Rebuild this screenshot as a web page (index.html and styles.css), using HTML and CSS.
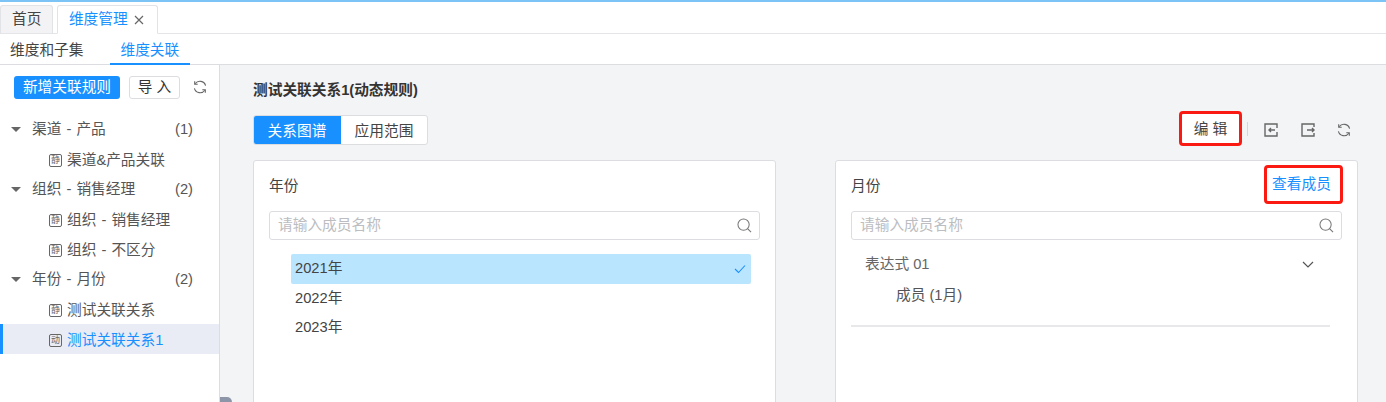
FILE: index.html
```html
<!DOCTYPE html>
<html lang="zh-CN">
<head>
<meta charset="utf-8">
<title>维度管理</title>
<link rel="stylesheet" href="styles.css">
</head>
<body>
<svg width="0" height="0" class="defs">
  <defs>
    <symbol id="refresh" viewBox="0 0 14 14"><path d="M12.6 5.6A5.8 5.8 0 0 0 2.2 3.8M1.4 8.4a5.8 5.8 0 0 0 10.4 1.8" fill="none" stroke="currentColor" stroke-width="1.1"/><path d="M1.7 1.2v3h3M12.3 12.8v-3h-3" fill="none" stroke="currentColor" stroke-width="1.1"/></symbol>
    <symbol id="search" viewBox="0 0 16 16"><circle cx="7" cy="7" r="6" fill="none" stroke="currentColor" stroke-width="1.1"/><path d="M11.5 11.5l3.5 3.5" stroke="currentColor" stroke-width="1.2" fill="none"/></symbol>
  </defs>
</svg>
<div class="app">
  <div class="tabbar">
    <div class="tab">首页</div>
    <div class="tab tab-active"><span>维度管理</span><svg class="close" viewBox="0 0 10 10"><path d="M1 1l8 8M9 1l-8 8" fill="none" stroke="currentColor" stroke-width="1.2"/></svg></div>
  </div>
  <div class="subnav">
    <div class="subnav-item">维度和子集</div>
    <div class="subnav-item subnav-active">维度关联</div>
  </div>
  <div class="body">
    <aside class="sidebar">
      <div class="side-actions">
        <button class="btn-primary">新增关联规则</button>
        <button class="btn-import">导 入</button>
        <svg class="side-refresh"><use href="#refresh"/></svg>
      </div>
      <ul class="tree">
        <li class="group"><i class="caret"></i><span class="label">渠道 - 产品</span><span class="count">(1)</span></li>
        <li class="leaf"><span class="badge">静</span>渠道&amp;产品关联</li>
        <li class="group"><i class="caret"></i><span class="label">组织 - 销售经理</span><span class="count">(2)</span></li>
        <li class="leaf"><span class="badge">静</span>组织 - 销售经理</li>
        <li class="leaf"><span class="badge">静</span>组织 - 不区分</li>
        <li class="group"><i class="caret"></i><span class="label">年份 - 月份</span><span class="count">(2)</span></li>
        <li class="leaf"><span class="badge">静</span>测试关联关系</li>
        <li class="leaf leaf-active"><span class="badge">动</span>测试关联关系1</li>
      </ul>
    </aside>
    <main class="main">
      <h1 class="title">测试关联关系1(动态规则)</h1>
      <div class="toolbar">
        <div class="seg">
          <div class="seg-item seg-active">关系图谱</div>
          <div class="seg-item">应用范围</div>
        </div>
        <div class="tools">
          <button class="btn-edit">编 辑</button>
          <span class="tool-sep"></span>
          <svg class="tool-icon" viewBox="0 0 14 14"><path d="M6 1H1v12h12V9M13 5V1H6" fill="none" stroke="currentColor" stroke-width="1.4"/><path d="M11 7H5M7 5L5 7l2 2" fill="none" stroke="currentColor" stroke-width="1.4"/></svg>
          <svg class="tool-icon" viewBox="0 0 14 14"><path d="M13 4V1H1v12h12v-3" fill="none" stroke="currentColor" stroke-width="1.4"/><path d="M6 7h7M11 5l2 2-2 2" fill="none" stroke="currentColor" stroke-width="1.4"/></svg>
          <svg class="tool-icon"><use href="#refresh"/></svg>
        </div>
      </div>
      <div class="panels">
        <section class="panel">
          <div class="panel-head"><span>年份</span></div>
          <div class="search"><span class="placeholder">请输入成员名称</span><svg class="search-icon"><use href="#search"/></svg></div>
          <ul class="members">
            <li class="member member-active">2021年<svg class="check" viewBox="0 0 12 10"><path d="M1 5l3.5 3.5L11 1.5" fill="none" stroke="currentColor" stroke-width="1.1"/></svg></li>
            <li class="member">2022年</li>
            <li class="member">2023年</li>
          </ul>
        </section>
        <section class="panel">
          <div class="panel-head"><span>月份</span><a class="view-link">查看成员</a></div>
          <div class="search"><span class="placeholder">请输入成员名称</span><svg class="search-icon"><use href="#search"/></svg></div>
          <div class="expr">
            <div class="expr-head"><span>表达式 01</span><svg class="chevron" viewBox="0 0 12 7"><path d="M1 1l5 5 5-5" fill="none" stroke="currentColor" stroke-width="1.2"/></svg></div>
            <div class="expr-body">成员 (1月)</div>
          </div>
        </section>
      </div>
    </main>
    <div class="handle"></div>
  </div>
</div>
</body>
</html>
```
FILE: styles.css
```css
* { box-sizing: border-box; }
html, body { margin: 0; height: 100%; overflow: hidden; background: #fff; }
body { font: 14.7px/1.4 "Liberation Sans", "Noto Sans CJK SC", sans-serif; color: #333; }
ul { list-style: none; margin: 0; padding: 0; }
button { font: inherit; cursor: pointer; padding: 0; }
.defs { position: absolute; }
.app { height: 402px; display: flex; flex-direction: column; border-top: 2px solid #7cc4f5; }
.tabbar { height: 32px; flex: none; display: flex; gap: 4px; align-items: flex-end; border-bottom: 1px solid #e4e5e9; background: #fff; }
.tab { height: 29px; margin-bottom: -1px; padding: 0 11px; display: flex; align-items: center; gap: 6px; background: #f3f3f5; border: 1px solid #e2e3e7; border-bottom: 1px solid #e4e5e9; border-radius: 3px 3px 0 0; color: #444; }
.tab-active { background: #fff; border-bottom-color: #fff; color: #1890ff; padding: 0 13px 0 10.5px; gap: 6.5px; }
.close { width: 10px; height: 10px; color: #666; }
.subnav { height: 31px; flex: none; display: flex; align-items: stretch; padding-left: 10px; gap: 26px; border-bottom: 1px solid #dcdde1; background: #fff; color: #444; }
.subnav-item { line-height: 33px; margin-bottom: -1px; }
.subnav-active { color: #1890ff; border-bottom: 2px solid #1890ff; padding: 0 10.5px; margin-left: 0.5px; }
.body { flex: 1; display: flex; min-height: 0; position: relative; }
.sidebar { width: 220px; flex: none; background: #fff; border-right: 1px solid #dcdde1; }
.side-actions { height: 43px; padding: 11px 0 0 14px; display: flex; align-items: flex-start; }
.btn-primary { width: 106px; height: 23px; border: 0; border-radius: 3px; color: #fff; background: #1890ff; }
.btn-import { width: 51px; height: 23px; margin-left: 9px; border: 1px solid #dcdde1; border-radius: 3px; background: #fff; color: #333; }
.side-refresh { width: 14px; height: 14px; margin: 4px 0 0 13px; color: #666; }
.tree { margin-top: 6px; }
.tree li { height: 30px; display: flex; align-items: center; color: #555; word-spacing: 1px; }
.group { padding-left: 11px; }
.caret { width: 0; height: 0; border: 5px solid transparent; border-top: 5px solid #666; border-bottom: 0; }
.label { margin-left: 11px; width: 143px; }
.count { color: #555; }
.leaf { padding: 2px 0 0 49px; }
.badge { width: 13px; height: 13px; margin-right: 5px; flex: none; border: 1px solid #666; border-radius: 2px; font-size: 9px; line-height: 11px; text-align: center; color: #666; }
.tree .leaf-active { color: #1890ff; background: #e9ecf4; box-shadow: inset 3px 0 #1890ff; }
.main { flex: 1; min-width: 0; padding: 15px 28px 0 33px; background: #f3f4f6; }
.title { margin: 0; font-size: 14.7px; font-weight: 700; line-height: 20px; color: #333; }
.toolbar { margin-top: 11px; height: 34px; display: flex; align-items: flex-start; justify-content: space-between; }
.seg { margin-top: 4px; display: flex; height: 30px; border: 1px solid #dcdde1; border-radius: 3px; background: #fff; overflow: hidden; }
.seg-item { width: 86px; line-height: 30px; text-align: center; color: #444; }
.seg-active { width: 88px; margin: -1px 0 -1px -1px; line-height: 32px; background: #1890ff; color: #fff; }
.tools { display: flex; align-items: center; height: 35px; }
.btn-edit { width: 63px; height: 35px; padding-top: 1px; border: 3px solid #fb1a12; border-radius: 4px; background: #fff; color: #444; }
.tool-sep { width: 1px; height: 14px; margin: 0 16px 0 5px; background: #d6d7db; }
.tool-icon { width: 14px; height: 14px; margin: 2px 22.5px 0 0; color: #666; }
.tool-icon:last-child { margin-right: 7px; }
.panels { margin-top: 15px; display: grid; grid-template-columns: 523px 523px; gap: 59px; }
.panel { height: 300px; padding: 0 15px; background: #fff; border: 1px solid #dcdde1; border-radius: 3px; }
.panel-head { height: 50px; display: flex; align-items: center; justify-content: space-between; color: #444; }
.view-link { width: 79px; height: 39px; padding-right: 4px; margin-right: -1px; margin-top: 4px; align-self: flex-start; border: 3px solid #fb1a12; border-radius: 4px; color: #1890ff; text-align: center; line-height: 33px; background: #fff; }
.search { height: 29px; display: flex; align-items: center; justify-content: space-between; padding: 0 7px 0 8px; border: 1px solid #dcdde1; border-radius: 3px; background: #fff; }
.placeholder { color: #bcbdc1; }
.search-icon { width: 15px; height: 15px; color: #777; }
.members { margin: 14px 9px 0 22px; }
.member { height: 29.5px; padding: 0 4px; display: flex; align-items: center; justify-content: space-between; color: #444; }
.member-active { background: #bae5ff; border-radius: 2px; }
.check { width: 12px; height: 10px; margin-right: 1px; color: #1890ff; }
.expr { margin-top: 10px; width: 479px; height: 77px; border-bottom: 2px solid #e8e8ea; }
.expr-head { height: 28px; padding: 0 16px 0 14px; display: flex; align-items: center; justify-content: space-between; color: #666; }
.chevron { width: 12px; height: 7px; color: #555; }
.expr-body { margin-top: 6px; padding-left: 45px; line-height: 22px; color: #555; }
.handle { position: absolute; left: 220px; bottom: 0; width: 12px; height: 5px; background: #8d96a8; border-radius: 0 6px 0 0; }
```
